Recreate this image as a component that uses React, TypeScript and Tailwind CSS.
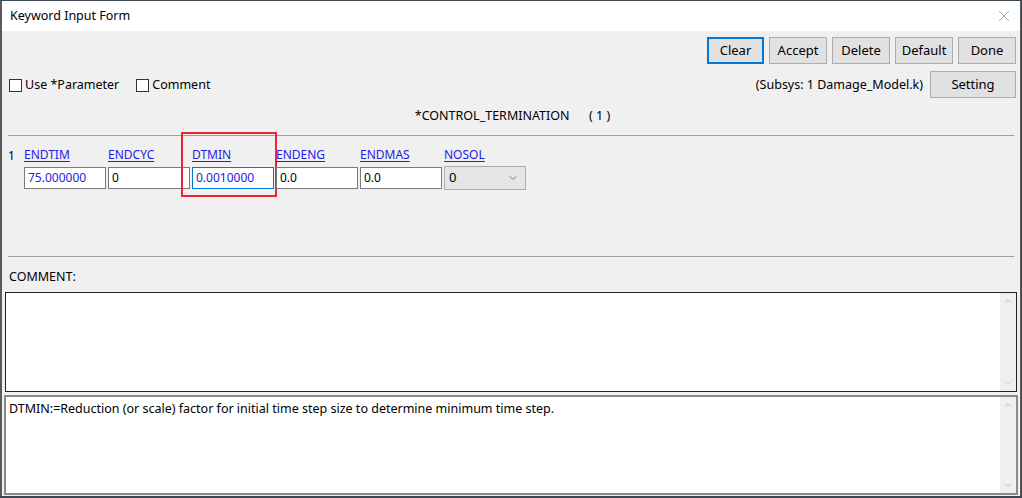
import { ChevronDown, ChevronUp } from "lucide-react";

const FONT = "font-['Microsoft_YaHei','Noto_Sans','Open_Sans',sans-serif]";

const FIELDS = [
  { name: "ENDTIM", value: "75.000000", blue: true },
  { name: "ENDCYC", value: "0" },
  { name: "DTMIN", value: "0.0010000", blue: true, focus: true },
  { name: "ENDENG", value: "0.0" },
  { name: "ENDMAS", value: "0.0" },
];

function Btn({ label, primary, w }: { label: string; primary?: boolean; w: string }) {
  return (
    <button
      type="button"
      className={`${w} flex h-[27px] items-center justify-center bg-[#e1e1e1] text-[13px] text-black ${
        primary ? "border-2 border-[#0078d7]" : "border border-[#adadad]"
      }`}
    >
      {label}
    </button>
  );
}

function Scroller() {
  return (
    <div className="flex w-[16px] flex-col items-center justify-between bg-[#f0f0f0] py-[2px] text-[#c2c2c2]">
      <ChevronUp className="h-[12px] w-[12px]" strokeWidth={2} />
      <ChevronDown className="h-[12px] w-[12px]" strokeWidth={2} />
    </div>
  );
}

export default function App() {
  return (
    <div className={`h-[498px] w-[1022px] overflow-hidden bg-[#3d4752] pt-px ${FONT}`}>
      <div className="flex h-[495px] w-[1021px] flex-col border-l-2 border-r border-[#5a5a5a] bg-[#f0f0f0]">
        {/* title bar */}
        <div className="flex h-[30px] items-center justify-between bg-white pl-[8px] pr-[8px]">
          <span className="text-[12.5px] text-black">Keyword Input Form</span>
          <svg width="12" height="12" viewBox="0 0 12 12" className="mr-[2px]">
            <path d="M1 1 L11 11 M11 1 L1 11" stroke="#b0b0b0" strokeWidth="1" />
          </svg>
        </div>

        {/* action buttons */}
        <div className="mt-[6px] flex justify-end gap-[5px] pr-[4px]">
          <Btn label="Clear" primary w="w-[57px]" />
          <Btn label="Accept" w="w-[58px]" />
          <Btn label="Delete" w="w-[58px]" />
          <Btn label="Default" w="w-[58px]" />
          <Btn label="Done" w="w-[58px]" />
        </div>

        {/* options row */}
        <div className="mt-[7px] flex items-center pr-[4px] pl-[7px]">
          <label className="flex translate-y-[1px] items-center gap-[3px] text-[12.5px] text-black">
            <span className="h-[13px] w-[13px] border border-[#333] bg-white" />
            Use *Parameter
          </label>
          <label className="ml-[17px] flex translate-y-[1px] items-center gap-[3px] text-[12.5px] text-black">
            <span className="h-[13px] w-[13px] border border-[#333] bg-white" />
            Comment
          </label>
          <span className="ml-auto mr-[7px] translate-y-[1px] text-[12.5px] text-black">(Subsys: 1 Damage_Model.k)</span>
          <Btn label="Setting" w="w-[86px]" />
        </div>

        {/* keyword title */}
        <div className="mt-[6px] flex h-[24px] items-center justify-center pl-[3px] text-[12.5px] text-black">
          <span className="whitespace-pre">*CONTROL_TERMINATION      ( 1 )</span>
        </div>

        <div className="mx-[6px] mt-[7px] h-px bg-[#a0a0a0]" />

        {/* card fields */}
        <div className="mt-[10px] flex pl-[6px]">
          <span className="w-[16px] pt-[1px] text-[12px] leading-[18px] text-black">1</span>
          {FIELDS.map((f) => (
            <div key={f.name} className="relative flex w-[84px] flex-col">
              {f.focus && (
                <div className="pointer-events-none absolute left-[-11px] top-[-14px] h-[65px] w-[96px] border-2 border-[#e8262d]" />
              )}
              <span className="text-[12px] leading-[18px] text-[#1e1ee6] underline underline-offset-[2px]">
                {f.name}
              </span>
              <div
                className={`mt-[3px] flex h-[22px] w-[82px] items-center bg-white px-[3px] text-[12px] ${
                  f.focus ? "border border-[#0078d7]" : "border border-[#7a7a7a]"
                } ${f.blue ? "text-[#2323d8]" : "text-black"}`}
              >
                {f.value}
              </div>
            </div>
          ))}
          <div className="flex w-[84px] flex-col">
            <span className="text-[12px] leading-[18px] text-[#1e1ee6] underline underline-offset-[2px]">NOSOL</span>
            <div className="mt-[2px] flex h-[24px] w-[82px] items-center justify-between border border-[#adadad] bg-[#e5e5e5] pl-[4px] pr-[6px] text-[13px] text-black">
              0
              <ChevronDown className="h-[12px] w-[12px] text-[#555]" strokeWidth={1.5} />
            </div>
          </div>
        </div>

        <div className="mx-[6px] mt-[66px] h-px bg-[#a0a0a0]" />

        <div className="mt-[12px] pl-[7px] text-[12.5px] leading-[16px] text-black">COMMENT:</div>

        {/* comment box */}
        <div className="ml-[3px] mr-[3px] mt-[7px] flex h-[100px] border border-[#222] bg-white">
          <div className="flex-1" />
          <Scroller />
        </div>

        {/* description box */}
        <div className="ml-[2px] mr-[2px] mt-[3px] flex h-[100px] border-2 border-[#8a8a8a] bg-white">
          <div className="flex-1 px-[3px] pt-[3px] text-[12.5px] text-black">
            DTMIN:=Reduction (or scale) factor for initial time step size to determine minimum time step.
          </div>
          <Scroller />
        </div>
      </div>
    </div>
  );
}
